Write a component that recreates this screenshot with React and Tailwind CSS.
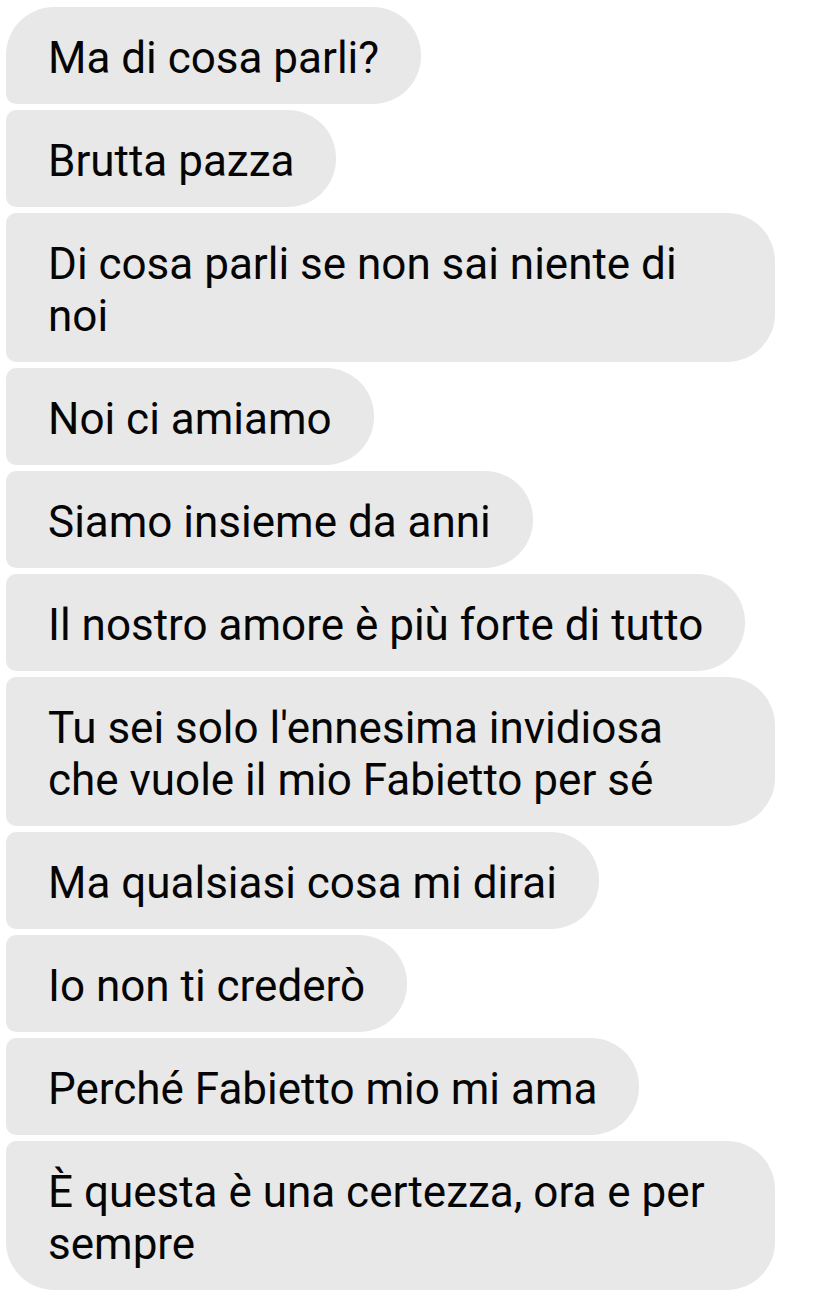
const messages = [
  'Ma di cosa parli?',
  'Brutta pazza',
  'Di cosa parli se non sai niente di noi',
  'Noi ci amiamo',
  'Siamo insieme da anni',
  'Il nostro amore è più forte di tutto',
  "Tu sei solo l'ennesima invidiosa che vuole il mio Fabietto per sé",
  'Ma qualsiasi cosa mi dirai',
  'Io non ti crederò',
  'Perché Fabietto mio mi ama',
  'È questa è una certezza, ora e per sempre',
];

function Bubble({ text, first, last }) {
  const corners = first
    ? 'rounded-l-[10px] rounded-tl-[48px] rounded-r-[48px]'
    : last
    ? 'rounded-l-[10px] rounded-bl-[48px] rounded-r-[48px]'
    : 'rounded-l-[10px] rounded-r-[48px]';
  return (
    <div
      className={`max-w-[769px] bg-[#e8e8e8] px-[42px] pt-[25px] pb-[20px] text-[44px] leading-[52px] text-[#050505] ${corners}`}
    >
      {text}
    </div>
  );
}

export default function App() {
  return (
    <div
      className="min-h-screen w-[836px] bg-white pl-[6px] pt-[7px]"
      style={{ fontFamily: 'Roboto, "Noto Sans", sans-serif' }}
    >
      <div className="flex flex-col items-start gap-[6px]">
        {messages.map((m, i) => (
          <Bubble key={i} text={m} first={i === 0} last={i === messages.length - 1} />
        ))}
      </div>
    </div>
  );
}
